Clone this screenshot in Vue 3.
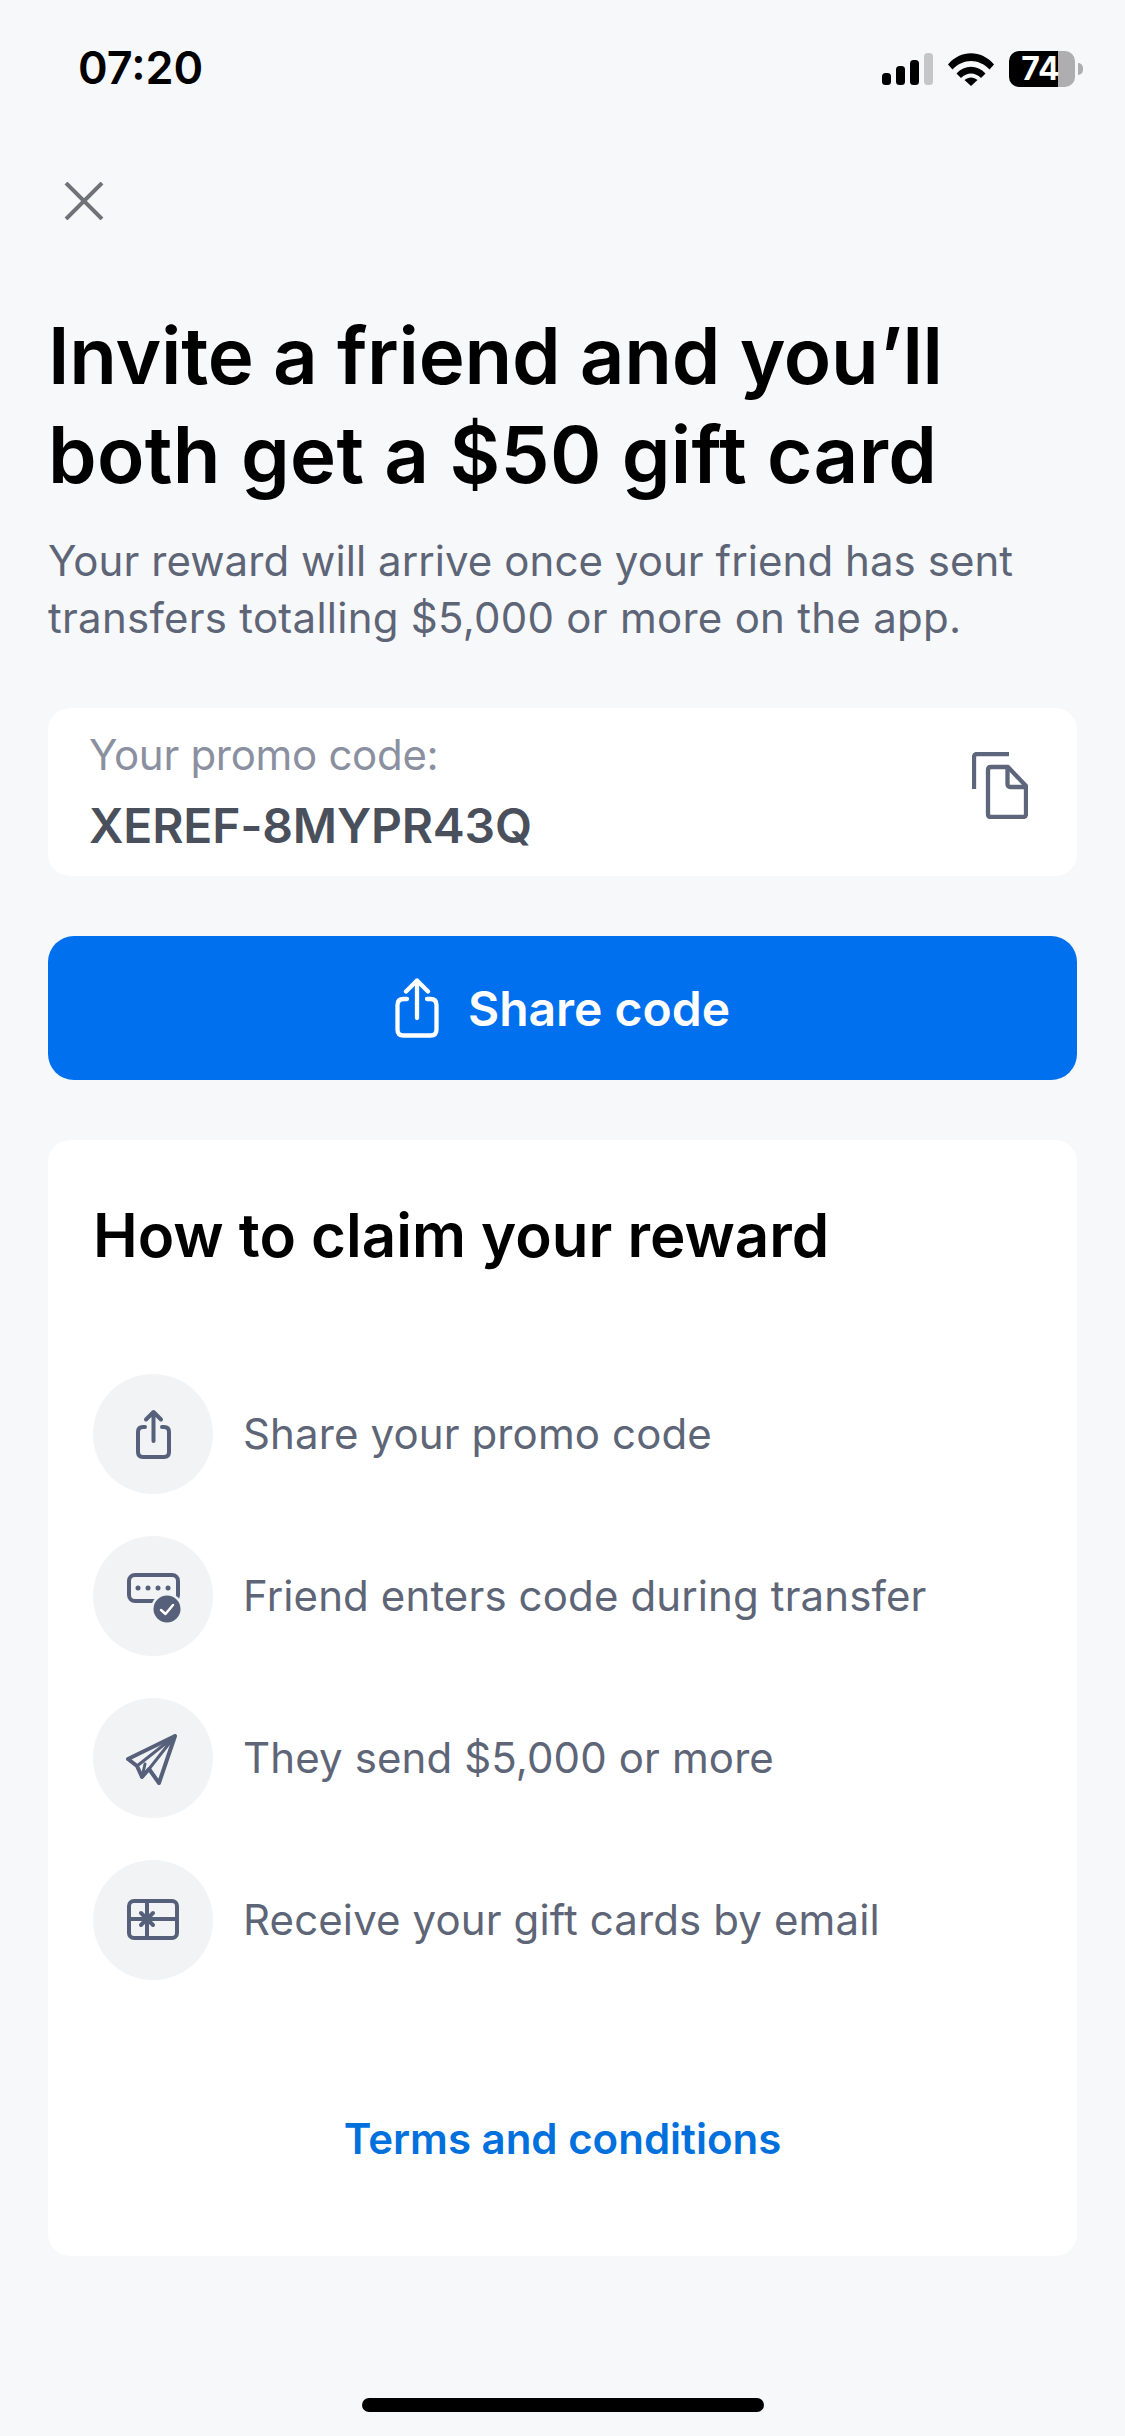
<script setup>
const steps = [
  { id: 'share', text: 'Share your promo code' },
  { id: 'code', text: 'Friend enters code during transfer' },
  { id: 'plane', text: 'They send $5,000 or more' },
  { id: 'gift', text: 'Receive your gift cards by email' }
]
</script>

<template>
  <div class="page">
    <div class="status">
      <span class="time">07:20</span>
      <div class="status-icons">
        <svg class="signal" width="51" height="32" viewBox="0 0 51 32">
          <rect x="0" y="20" width="9" height="12" rx="3.5" fill="#000" />
          <rect x="14" y="13" width="9" height="19" rx="3.5" fill="#000" />
          <rect x="28" y="7" width="9" height="25" rx="3.5" fill="#000" />
          <rect x="42" y="0" width="9" height="32" rx="3.5" fill="#c6c6c8" />
        </svg>
        <svg class="wifi" width="46" height="33" viewBox="0 0 46 33">
          <path d="M0 11.5C12.500 -3.500 33.500 -3.500 46 11.500L41.500 16.500C31 5 15 5 4.500 16.500Z" fill="#000" />
          <path d="M8.500 20.500C16.500 11.500 29.500 11.500 37.500 20.500L33 25C27 19 19 19 13 25Z" fill="#000" />
          <path d="M16.500 27C20.500 23.500 25.500 23.500 29.500 27L23 33Z" fill="#000" />
        </svg>
        <div class="battery">
          <span class="battery-level">74</span>
          <span class="battery-cap"></span>
        </div>
      </div>
    </div>

    <div class="close-row">
      <svg width="40" height="38" viewBox="0 0 40 38">
        <path d="M2 1L38 37M38 1L2 37" stroke="#6f7378" stroke-width="4" fill="none" />
      </svg>
    </div>

    <h1 class="title">
      <span class="title-a">Invite a friend and you’ll</span><br />
      <span class="title-b">both get a $50 gift card</span>
    </h1>
    <p class="subtitle">
      <span class="sub-a">Your reward will arrive once your friend has sent</span><br />
      <span class="sub-b">transfers totalling $5,000 or more on the app.</span>
    </p>

    <div class="promo">
      <div>
        <div class="promo-label">Your promo code:</div>
        <div class="promo-code">XEREF-8MYPR43Q</div>
      </div>
      <svg class="copy" width="56" height="67" viewBox="0 0 56 67" fill="none" stroke="#5d667b" stroke-width="4.300" stroke-linejoin="round">
        <path d="M2 37V5Q2 2 5 2H37" />
        <path d="M16 18Q16 15 19 15H36L54 34V62Q54 65 51 65H19Q16 65 16 62Z" />
        <path d="M35.500 15V32Q35.500 35 38.500 35H54" />
      </svg>
    </div>

    <button class="share-btn">
      <svg width="44" height="60" viewBox="0 0 44 60" fill="none" stroke="#fff" stroke-width="4.300" stroke-linecap="round" stroke-linejoin="round">
        <path d="M12 21H8.500Q2.500 21 2.500 27V51.500Q2.500 57.500 8.500 57.500H35.500Q41.500 57.500 41.500 51.500V27Q41.500 21 35.500 21H32" />
        <path d="M22 40V2.500M11 13.500L22 2.500L33 13.500" />
      </svg>
      <span>Share code</span>
    </button>

    <div class="claim">
      <h2 class="claim-title">How to claim your reward</h2>
      <ul class="steps">
        <li v-for="step in steps" :key="step.id" class="step">
          <div class="step-icon">
            <svg width="120" height="120" viewBox="0 0 120 120" fill="none" stroke="#56607a" stroke-width="4" stroke-linecap="round" stroke-linejoin="round">
              <template v-if="step.id === 'share'">
                <path d="M52 53H50Q45 53 45 58V78Q45 83 50 83H71Q76 83 76 78V58Q76 53 71 53H69" />
                <path d="M60.500 67V38M53 45.500L60.500 38L68 45.500" />
              </template>
              <template v-else-if="step.id === 'code'">
                <rect x="36" y="39" width="49" height="26" rx="6" />
                <g fill="#56607a" stroke="none">
                  <circle cx="45" cy="52" r="2.500" />
                  <circle cx="55" cy="52" r="2.500" />
                  <circle cx="65" cy="52" r="2.500" />
                  <circle cx="75" cy="52" r="2.500" />
                  <circle cx="74" cy="73" r="16" fill="#f1f3f5" />
                  <circle cx="74" cy="73" r="13.500" />
                </g>
                <path d="M68 74L72.500 78L80 69" stroke="#fff" stroke-width="2.500" />
              </template>
              <template v-else-if="step.id === 'plane'">
                <path d="M82 38L35 61L44 68L49 79L56 71L66 85Z" />
                <path d="M82 38L44 68M82 38L56 71M49 79L52 66" stroke-width="3" />
              </template>
              <template v-else>
                <rect x="36" y="41" width="48" height="37" rx="5" />
                <path d="M54 41V78M36 59H84" />
                <path d="M48 53L60 65M60 53L48 65" />
              </template>
            </svg>
          </div>
          <span class="step-text">{{ step.text }}</span>
        </li>
      </ul>
      <div class="terms">Terms and conditions</div>
    </div>

    <div class="home-bar"></div>
  </div>
</template>

<style>
body {
  background: #f7f8fa;
}
</style>

<style scoped>
.page {
  width: 1125px;
  height: 2436px;
  box-sizing: border-box;
  padding: 0 48px;
  background: #f7f8fa;
  font-family: Inter, "Noto Sans", sans-serif;
  font-optical-sizing: none;
  display: flex;
  flex-direction: column;
  overflow: hidden;
}

.status {
  height: 136px;
  padding-top: 44px;
  box-sizing: border-box;
  display: flex;
  justify-content: space-between;
  align-items: flex-start;
  padding-left: 30px;
  margin-right: 2px;
}

.time {
  font-size: 45px;
  line-height: 48px;
  font-weight: 600;
  color: #000;
}

.status-icons {
  display: flex;
  align-items: center;
  padding-top: 7px;
}

.wifi {
  margin-left: 15px;
}

.battery {
  margin-left: 15px;
  width: 66px;
  height: 36px;
  border-radius: 10px;
  background: linear-gradient(to right, #000 49px, #aeaeb0 49px);
  position: relative;
  display: flex;
  align-items: center;
  justify-content: center;
  padding-right: 3px;
  box-sizing: border-box;
}

.battery-level {
  color: #fff;
  font-size: 32px;
  font-weight: 700;
  line-height: 36px;
}

.battery-cap {
  position: absolute;
  right: -8px;
  top: 12px;
  width: 5px;
  height: 12px;
  border-radius: 0 6px 6px 0;
  background: #aeaeb0;
}

.close-row {
  height: 170px;
  padding-left: 16px;
  padding-top: 46px;
  box-sizing: border-box;
}

.close-row svg {
  display: block;
}

.title {
  margin: 0;
  font-size: 78px;
  line-height: 99px;
  font-weight: 600;
  color: #000;
}

.title-a {
  letter-spacing: -0.25px;
}

.title-b {
  letter-spacing: 0.33px;
}

.subtitle {
  margin: 28px 0 0;
  font-size: 42px;
  line-height: 57px;
  font-weight: 400;
  color: #5d6577;
}

.sub-a {
  letter-spacing: 0.06px;
}

.sub-b {
  letter-spacing: 0.26px;
}

.promo {
  margin-top: 62px;
  height: 168px;
  box-sizing: border-box;
  background: #fff;
  border-radius: 22px;
  padding: 18px 49px 0 41px;
  display: flex;
  justify-content: space-between;
  align-items: flex-start;
}

.promo-label {
  font-size: 42px;
  line-height: 58px;
  letter-spacing: -0.3px;
  color: #8b90a0;
}

.promo-code {
  margin-top: 13px;
  font-size: 48px;
  line-height: 58px;
  letter-spacing: -0.2px;
  font-weight: 600;
  color: #4a4f5c;
}

.copy {
  margin-top: 26px;
  flex-shrink: 0;
}

.share-btn {
  margin-top: 60px;
  height: 144px;
  width: 100%;
  border: none;
  border-radius: 26px;
  background: #0070ee;
  color: #fff;
  display: flex;
  align-items: center;
  justify-content: center;
  gap: 29px;
  font-family: inherit;
  font-optical-sizing: none;
  font-size: 48px;
  font-weight: 600;
  flex-shrink: 0;
}

.claim {
  margin-top: 60px;
  height: 1116px;
  box-sizing: border-box;
  background: #fff;
  border-radius: 22px;
  padding: 58px 45px 0;
  flex-shrink: 0;
}

.claim-title {
  margin: 0;
  font-size: 60px;
  line-height: 74px;
  font-weight: 600;
  color: #000;
}

.steps {
  list-style: none;
  margin: 102px 0 0;
  padding: 0;
  display: flex;
  flex-direction: column;
  gap: 42px;
}

.step {
  display: flex;
  align-items: center;
  gap: 30px;
}

.step-icon {
  width: 120px;
  height: 120px;
  border-radius: 50%;
  background: #f1f3f5;
  flex-shrink: 0;
}

.step-icon svg {
  display: block;
}

.step-text {
  margin-bottom: 2px;
  font-size: 42px;
  letter-spacing: 0.12px;
  font-weight: 400;
  color: #5d6577;
}

.terms {
  margin-top: 129px;
  text-align: center;
  font-size: 42px;
  line-height: 60px;
  font-weight: 600;
  color: #0070dd;
}

.home-bar {
  margin: 142px auto 0;
  width: 402px;
  height: 14px;
  border-radius: 7px;
  background: #000;
  flex-shrink: 0;
}
</style>
